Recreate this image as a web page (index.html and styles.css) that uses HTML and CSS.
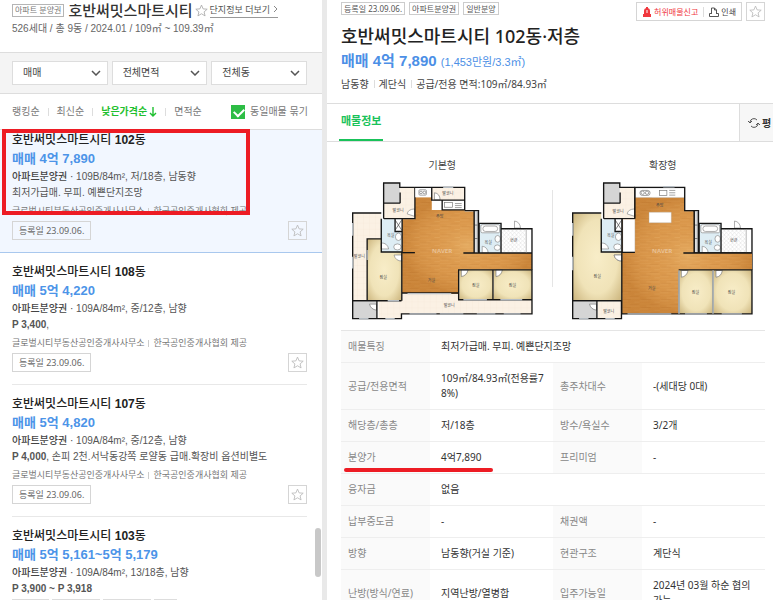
FILE: index.html
```html
<!DOCTYPE html>
<html lang="ko">
<head>
    <meta charset="UTF-8">
    <meta name="viewport" content="width=device-width, initial-scale=1.0">
    <title>호반써밋스마트시티 매물</title>
    <link rel="stylesheet" href="styles.css">
</head>
<body>
    <!-- shared icons and floor plan fills -->
    <svg class="defs" aria-hidden="true">
        <defs>
            <symbol id="star" viewBox="0 0 24 24">
                <path d="M12 2l3 7 7.500.600-5.700 5 1.800 7.400-6.600-4-6.600 4 1.800-7.400-5.700-5 7.500-.600z" fill="none" stroke="currentColor" stroke-width="1.600"/>
            </symbol>
            <symbol id="chevron" viewBox="0 0 10 6">
                <path d="M1 1l4 4 4-4" fill="none" stroke="#555" stroke-width="1.500"/>
            </symbol>
            <pattern id="wood" width="60" height="24" patternUnits="userSpaceOnUse">
                <rect width="60" height="24" fill="#d9964a"/>
                <path d="M0 0h34M20 8h40M0 16h26M44 20h16" stroke="#e0a35a" stroke-width="2"/>
                <path d="M30 4h26M4 12h30" stroke="#d08c42" stroke-width="2"/>
            </pattern>
            <radialGradient id="glow">
                <stop offset="0" stop-color="#ffdc98" stop-opacity=".3"/>
                <stop offset=".5" stop-color="#e8a95c" stop-opacity=".1"/>
                <stop offset="1" stop-color="#a85c12" stop-opacity=".3"/>
            </radialGradient>
            <pattern id="tile" width="18" height="18" patternUnits="userSpaceOnUse">
                <rect width="18" height="18" fill="#fbf1e4"/>
                <path d="M0 0h18M0 0v18" stroke="#efdfcd" stroke-width="1"/>
            </pattern>
            <pattern id="check" width="12" height="12" patternUnits="userSpaceOnUse">
                <rect width="12" height="12" fill="#fff"/>
                <path d="M0 0l12 12M12 0L0 12" stroke="#ddd" stroke-width="1.500"/>
            </pattern>
            <radialGradient id="room" r=".7">
                <stop offset="0" stop-color="#f8edc8"/>
                <stop offset=".6" stop-color="#f0e3b8"/>
                <stop offset="1" stop-color="#cbb47c"/>
            </radialGradient>
            <!-- rooms that are the same in both plans -->
            <g id="core">
                <path d="M188 353V134h38V68h50v38h98v5h28v123h172v50H356v71z" fill="url(#wood)"/>
                <path d="M188 353V134h38V68h50v38h98v5h28v123h172v50H356v71z" fill="url(#glow)"/>
                <path d="M134 86h48V38h44v94h-92z" fill="url(#tile)"/>
                <path d="M133 27h48v59h-48z" fill="#d5d5d5"/>
                <path d="M126 134h62v97h-62z" fill="#deedf4"/>
                <path d="M167 134h20v36h-20z" fill="#fff"/>
                <path d="M168 137l18 28M186 137l-18 28" stroke="#444" stroke-width="2"/>
                <path d="M418 146h64v88h-64z" fill="#deedf4"/>
                <path d="M484 162h90v72h-90z" fill="#fff"/>
                <path d="M484 162h72v72h-72z" fill="url(#check)"/>
                <path d="M402 111h13v123h-13z" fill="#fff"/>
                <path d="M404 111v120M411 111v120M404 151h8M404 191h8" stroke="#555" stroke-width="2"/>
                <g fill="#fff" stroke="#888" stroke-width="2">
                    <rect x="422" y="150" width="56" height="24" rx="4"/>
                    <rect x="428" y="154" width="44" height="16" rx="8"/>
                    <ellipse cx="472" cy="192" rx="8" ry="10"/>
                    <ellipse cx="471" cy="218" rx="9" ry="8"/>
                    <ellipse cx="177" cy="186" rx="9" ry="11"/>
                    <ellipse cx="174" cy="216" rx="11" ry="9"/>
                    <path d="M126 222v-18q18 0 22 18zM426 234v-20q16 2 18 20zM522 160v-21q16 2 18 21zM188 240v18q-20 0-24-18zM203 118q2-14 22-15v22z"/>
                </g>
                <g fill="none" stroke="#151515" stroke-width="4">
                    <path d="M133 132V26h48v13h45M133 86h49M182 54v32M134 132h92V39M126 132v99h61M167 134v36h21M188 132v100"/>
                    <path d="M374 108h41v125M402 108v126M417 234V146h65v88M483 162h91v122M370 234h204"/>
                    <path d="M188 233h38"/>
                </g>
                <path d="M557 163v70" stroke="#999" stroke-width="2"/>
            </g>
        </defs>
    </svg>

    <div class="page">
        <!-- Left: listing panel -->
        <aside class="list-panel">
            <header class="complex">
                <div class="complex-head">
                    <span class="type-badge">아파트 분양권</span>
                    <h1>호반써밋스마트시티</h1>
                    <svg class="star"><use href="#star"/></svg>
                    <a class="more" href="#more">단지정보 더보기 <svg viewBox="0 0 5 8"><path d="M1 1l3 3-3 3" fill="none" stroke="#888"/></svg></a>
                </div>
                <p class="summary">526세대 / 총 9동 / 2024.01 / 109㎡ ~ 109.39㎡</p>
            </header>

            <div class="filters">
                <div class="filter">
                    <select aria-label="거래유형"><option>매매</option></select>
                    <svg><use href="#chevron"/></svg>
                </div>
                <div class="filter">
                    <select aria-label="면적"><option>전체면적</option></select>
                    <svg><use href="#chevron"/></svg>
                </div>
                <div class="filter">
                    <select aria-label="동"><option>전체동</option></select>
                    <svg><use href="#chevron"/></svg>
                </div>
            </div>

            <div class="sort">
                <a href="#rank">랭킹순</a>
                <a href="#recent">최신순</a>
                <a href="#price" class="on">낮은가격순<svg viewBox="0 0 8 10"><path d="M4 0v9M1 6l3 3 3-3" fill="none" stroke="currentColor" stroke-width="1.400"/></svg></a>
                <a href="#area">면적순</a>
                <label class="group"><input type="checkbox" checked>동일매물 묶기</label>
            </div>

            <div class="items">
                <article class="item active">
                    <h2>호반써밋스마트시티 <b>102</b>동</h2>
                    <p class="price">매매 4억 7,890</p>
                    <p class="spec"><b>아파트분양권 ·</b> 109B/84m², 저/18층, 남동향</p>
                    <p class="desc">최저가급매. 무피. 예쁜단지조망</p>
                    <p class="agency"><span>글로벌시티부동산공인중개사사무소</span><span>한국공인중개사협회 제공</span></p>
                    <div class="item-foot">
                        <span class="date">등록일 23.09.06.</span>
                        <button class="fav" aria-label="관심매물"><svg><use href="#star"/></svg></button>
                    </div>
                    <div class="mark-box"></div>
                </article>

                <article class="item">
                    <h2>호반써밋스마트시티 <b>108</b>동</h2>
                    <p class="price">매매 5억 4,220</p>
                    <p class="spec"><b>아파트분양권 ·</b> 109A/84m², 중/12층, 남향</p>
                    <p class="desc"><strong>P 3,400</strong>,</p>
                    <p class="agency"><span>글로벌시티부동산공인중개사사무소</span><span>한국공인중개사협회 제공</span></p>
                    <div class="item-foot">
                        <span class="date">등록일 23.09.06.</span>
                        <button class="fav" aria-label="관심매물"><svg><use href="#star"/></svg></button>
                    </div>
                </article>

                <article class="item">
                    <h2>호반써밋스마트시티 <b>107</b>동</h2>
                    <p class="price">매매 5억 4,820</p>
                    <p class="spec"><b>아파트분양권 ·</b> 109A/84m², 중/12층, 남향</p>
                    <p class="desc"><strong>P 4,000</strong>, 손피 2천.서낙동강쪽 로얄동 급매.확장비 옵션비별도</p>
                    <p class="agency"><span>글로벌시티부동산공인중개사사무소</span><span>한국공인중개사협회 제공</span></p>
                    <div class="item-foot">
                        <span class="date">등록일 23.09.06.</span>
                        <button class="fav" aria-label="관심매물"><svg><use href="#star"/></svg></button>
                    </div>
                </article>

                <article class="item">
                    <h2>호반써밋스마트시티 <b>103</b>동</h2>
                    <p class="price">매매 5억 5,161~5억 5,179</p>
                    <p class="spec"><b>아파트분양권 ·</b> 109A/84m², 13/18층, 남향</p>
                    <p class="desc"><strong>P 3,900 ~ P 3,918</strong></p>
                    <div class="tags"><span></span><span></span><span></span><span></span></div>
                </article>
            </div>
            <div class="scroll-thumb"></div>
        </aside>

        <!-- Right: detail panel -->
        <main class="detail">
            <header class="detail-head">
                <div class="top-row">
                    <span class="badge">등록일 23.09.06.</span>
                    <span class="badge">아파트분양권</span>
                    <span class="badge">일반분양</span>
                    <div class="tools">
                        <button class="report"><svg viewBox="0 0 10 10"><path d="M2 7V4a3 3 0 0 1 6 0v3zM1 7h8v3H1zM4 0h2v2H4z" fill="#f0383e"/><path d="M5 3v3" stroke="#fff"/></svg>허위매물신고</button>
                        <button class="print"><svg viewBox="0 0 10 10"><path d="M2.500 7V1h3l2 2v4M5.500 1v2h2M2 6.500H.500v3h9v-3H8" fill="none" stroke="#555"/></svg>인쇄</button>
                    </div>
                    <button class="fav" aria-label="관심매물"><svg><use href="#star"/></svg></button>
                </div>
                <h2>호반써밋스마트시티 102동·저층</h2>
                <p class="detail-price">매매 4억 7,890 <span>(1,453만원/3.3㎡)</span></p>
                <p class="facts"><span>남동향</span><span>계단식</span><span>공급/전용 면적:109㎡/84.93㎡</span></p>
            </header>

            <nav class="tabs">
                <a href="#info" class="tab">매물정보</a>
                <button class="unit"><svg viewBox="0 0 12 12"><path d="M2 5a4 4 0 0 1 7-2M10 7a4 4 0 0 1-7 2M0 4l2 2 2-2M8 8l2-2 2 2" fill="none" stroke="#555"/></svg>평</button>
            </nav>

            <section class="plans">
                <figure>
                    <figcaption>기본형</figcaption>
                    <svg viewBox="36 20 544 414" role="img" aria-label="기본형 평면도">
                        <path d="M41 116h85v76H84v184H41zM118 376h68v-21h388v60H186v14h-68z" fill="url(#tile)"/>
                        <path d="M276 39h98v38h-98z" fill="url(#tile)"/>
                        <path d="M84 192h42v40h60v144H84z" fill="url(#room)"/>
                        <path d="M41 378h71v51H41z" fill="#d5d5d5"/>
                        <use href="#core"/>
                        <path d="M358 284h100v88H358z" fill="url(#room)"/>
                        <path d="M460 284h114v88H460z" fill="url(#room)"/>
                        <path d="M227 40h48v28h-48zM308 78h64v28h-64z" fill="#fff"/>
                        <g fill="#fff" stroke="#777" stroke-width="2">
                            <rect x="238" y="46" width="22" height="16" rx="3"/>
                            <circle cx="244" cy="54" r="4"/><circle cx="254" cy="54" r="4"/>
                            <rect x="314" y="84" width="24" height="14"/>
                            <path d="M345 87h20M345 93h20M345 99h20"/>
                            <path d="M284 76V55q16 2 17 21zM364 284v20q16-2 20-20zM467 284v20q16-2 19-20zM112 404V386H91q4 16 21 18z"/>
                        </g>
                        <g fill="none" stroke="#151515" stroke-width="4">
                            <path d="M226 39h148v69M276 39v38h98M307 78v28h67M126 115H41v314h77M84 376V192h42M187 231v145M41 376h145M113 378v51M118 429h68v-14h388V284H356v89h218M458 284v89M188 353h168"/>
                        </g>
                        <path d="M41 145v38M41 245v35M204 355h130M145 376h34M310 39h30M60 429h28M138 429h28M210 415h80M300 415h70M410 415h55M490 415h50M370 373h70M480 373h65M84 225v30" stroke="#b5bcc2" stroke-width="4"/>
                        <g class="room-name">
                            <text x="176" y="112">발코니</text><text x="324" y="62">발코니</text><text x="300" y="129">주방</text>
                            <text x="154" y="187">욕실</text><text x="444" y="208">욕실</text><text x="520" y="202">현관</text>
                            <text x="61" y="249">발코니</text><text x="132" y="311">침실</text><text x="275" y="319">거실</text>
                            <text x="407" y="335">침실</text><text x="516" y="335">침실</text><text x="328" y="395">발코니</text>
                        </g>
                        <text class="watermark" x="307" y="234">NAVER</text>
                    </svg>
                </figure>
                <figure>
                    <figcaption>확장형</figcaption>
                    <svg viewBox="36 20 544 414" role="img" aria-label="확장형 평면도">
                        <path d="M41 116h85v116h60v144H41z" fill="url(#room)"/>
                        <path d="M41 378h71v51H41z" fill="#d5d5d5"/>
                        <path d="M116 378h70v51h-70z" fill="url(#tile)"/>
                        <use href="#core"/>
                        <!-- living room and kitchen run the full height here -->
                        <path d="M188 415V134h38V68h148v43h28v123h172v50H356v131z" fill="url(#wood)"/>
                        <path d="M188 415V134h38V68h148v43h28v123h172v50H356v131z" fill="url(#glow)"/>
                        <path d="M358 284h100v131H358z" fill="url(#room)"/>
                        <path d="M460 284h114v131H460z" fill="url(#room)"/>
                        <path d="M227 41h146v28H227zM190 134h36v97h-36zM268 113h66v31h-66z" fill="#fff" stroke="#aaa" stroke-width="1"/>
                        <g fill="#fff" stroke="#777" stroke-width="2">
                            <rect x="241" y="48" width="30" height="15" rx="7"/>
                            <circle cx="249" cy="55" r="5"/><circle cx="262" cy="55" r="5"/>
                            <rect x="299" y="48" width="22" height="15"/>
                            <path d="M328 48h18M328 55h18M328 62h18"/>
                            <path d="M188 240v18q-20 0-24-18zM364 286v20q16-2 20-20zM467 286v20q16-2 19-20zM112 404V386H91q4 16 21 18z"/>
                        </g>
                        <g fill="none" stroke="#151515" stroke-width="4">
                            <path d="M226 132V39h148v69h28v126M188 132v100h38M370 234h204M126 115H41v314h145v-51M41 376h145M113 378v51M187 231v184h387V284H356"/>
                        </g>
                        <path d="M357 286v129M458 286v129" stroke="#9ca3a6" stroke-width="5"/>
                        <path d="M41 145v38M41 245v40M310 37h34M60 429h28M138 429h28M204 415h130M375 415h65M484 415h60" stroke="#b5bcc2" stroke-width="4"/>
                        <g class="room-name">
                            <text x="176" y="114">발코니</text><text x="300" y="97">주방</text><text x="154" y="187">욕실</text>
                            <text x="444" y="208">욕실</text><text x="520" y="202">현관</text><text x="114" y="309">침실</text>
                            <text x="276" y="345">거실</text><text x="406" y="356">침실</text><text x="513" y="356">침실</text>
                            <text x="148" y="411">발코니</text>
                        </g>
                        <text class="watermark" x="307" y="234">NAVER</text>
                    </svg>
                </figure>
            </section>

            <table class="info">
                <colgroup><col class="c-label"><col class="c-value"><col class="c-label"><col class="c-value"></colgroup>
                <tbody>
                    <tr><th>매물특징</th><td colspan="3">최저가급매. 무피. 예쁜단지조망</td></tr>
                    <tr><th>공급/전용면적</th><td>109㎡/84.93㎡(전용률78%)</td><th>총주차대수</th><td>-(세대당 0대)</td></tr>
                    <tr><th>해당층/총층</th><td>저/18층</td><th>방수/욕실수</th><td>3/2개</td></tr>
                    <tr><th class="marked">분양가<span class="mark-line"></span></th><td>4억7,890</td><th>프리미엄</th><td>-</td></tr>
                    <tr><th>융자금</th><td colspan="3">없음</td></tr>
                    <tr><th>납부중도금</th><td>-</td><th>채권액</th><td>-</td></tr>
                    <tr><th>방향</th><td>남동향(거실 기준)</td><th>현관구조</th><td>계단식</td></tr>
                    <tr><th>난방(방식/연료)</th><td>지역난방/열병합</td><th>입주가능일</th><td>2024년 03월 하순 협의가능</td></tr>
                </tbody>
            </table>
        </main>
    </div>
</body>
</html>
```

FILE: styles.css
```css
* {
    box-sizing: border-box;
}

body {
    margin: 0;
    font-family: "Liberation Sans", "Noto Sans CJK KR", sans-serif;
    font-size: 10px;
    line-height: 16px;
    color: #555;
    background: #fff;
}

h1, h2, p, figure {
    margin: 0;
}

a {
    color: inherit;
    text-decoration: none;
}

button, select, input {
    margin: 0;
    font: inherit;
    color: inherit;
}

.defs {
    position: absolute;
    width: 0;
    height: 0;
}

.page {
    display: flex;
    height: 100vh;
    overflow: hidden;
}

/* Left panel */
.list-panel {
    position: relative;
    flex: 0 0 327px;
    border-right: 5px solid #e9e9e9;
    overflow: hidden;
}

.complex {
    height: 52px;
    padding: 0 12px;
}

.complex-head {
    display: flex;
    align-items: center;
    height: 21px;
    white-space: nowrap;
}

.type-badge {
    padding: 0 2px;
    border: 1px solid #b5b5b5;
    font-size: 8px;
    line-height: 11px;
    color: #777;
}

.complex h1 {
    margin-left: 4px;
    font-size: 15px;
    line-height: 20px;
    font-weight: 500;
    color: #333;
}

.star {
    width: 13px;
    height: 13px;
    margin: 0 2px;
    color: #aaa;
}

.more {
    border-bottom: 1px solid #999;
    font-size: 9px;
    line-height: 13px;
    color: #555;
}

.more svg {
    width: 5px;
    height: 8px;
}

.summary {
    color: #666;
}

.filters {
    display: flex;
    gap: 4px;
    padding: 8px 15px 8px 12px;
    background: #f4f4f4;
    border-top: 1px solid #ddd;
    border-bottom: 1px solid #ddd;
}

.filter {
    position: relative;
    flex: 1;
}

.filter select {
    display: block;
    width: 100%;
    height: 24px;
    padding: 0 10px;
    border: 1px solid #ddd;
    border-radius: 0;
    background: #fff;
    color: #444;
    appearance: none;
}

.filter svg {
    position: absolute;
    top: 9px;
    right: 7px;
    width: 10px;
    height: 6px;
    pointer-events: none;
}

.sort {
    display: flex;
    align-items: center;
    height: 36px;
    padding: 0 14px 0 12px;
    border-bottom: 1px solid #ddd;
    color: #777;
    white-space: nowrap;
}

.sort a + a {
    margin-left: 8px;
    padding-left: 9px;
    background: linear-gradient(#ddd, #ddd) left center / 1px 8px no-repeat;
}

.sort .on {
    font-weight: 700;
    color: #1fbf2f;
}

.sort .on svg {
    width: 8px;
    height: 10px;
    margin-left: 2px;
    vertical-align: -2px;
}

.group {
    display: flex;
    align-items: center;
    gap: 5px;
    margin-left: auto;
}

.group input {
    width: 14px;
    height: 14px;
    background: #2dbd45;
    appearance: none;
}

.group input:checked::after {
    content: "";
    display: block;
    width: 8px;
    height: 5px;
    margin: 3px 0 0 3px;
    border-left: 2px solid #fff;
    border-bottom: 2px solid #fff;
    transform: rotate(-45deg);
}

/* Listing items */
.item {
    padding: 10px 0 12px;
    margin: 0 15px 0 12px;
    border-bottom: 1px solid #e8e8e8;
    white-space: nowrap;
}

.item.active {
    position: relative;
    margin: 0;
    padding: 1px 15px 12px 12px;
    background: #f2f7ff;
    border-bottom-color: #a9c8ee;
}

.item h2 {
    font-size: 12px;
    line-height: 18px;
    font-weight: 500;
    color: #222;
}

.price {
    font-size: 13px;
    line-height: 20px;
    font-weight: 700;
    color: #4c94e8;
}

.spec b {
    font-weight: 500;
    color: #444;
}

.desc strong {
    color: #555;
}

.agency {
    display: flex;
    margin: 2px 0;
    font-size: 9px;
    color: #777;
}

.agency span + span {
    margin-left: 4px;
    padding-left: 5px;
    background: linear-gradient(#ccc, #ccc) left center / 1px 7px no-repeat;
}

.item-foot {
    display: flex;
    justify-content: space-between;
}

.date {
    padding: 0 6px;
    border: 1px solid #d5d5d5;
    font-family: "Noto Sans", "Noto Sans CJK KR", sans-serif;
    font-size: 9px;
    line-height: 17px;
    color: #666;
}

.fav {
    display: flex;
    align-items: center;
    justify-content: center;
    width: 19px;
    height: 19px;
    padding: 0;
    border: 1px solid #d5d5d5;
    background: #fff;
    color: #bbb;
}

.active .fav {
    background: transparent;
}

.fav svg {
    width: 13px;
    height: 13px;
}

.tags {
    display: flex;
    gap: 3px;
    margin-top: 2px;
}

.tags span {
    width: 48px;
    height: 18px;
    border: 1px solid #ddd;
}

.tags span:first-child {
    width: 37px;
}

.tags span:last-child {
    width: 23px;
}

/* Red highlight over the selected listing */
.mark-box {
    position: absolute;
    top: -1px;
    left: 2px;
    width: 248px;
    height: 86px;
    border: 4px solid #ed1c24;
}

.scroll-thumb {
    position: absolute;
    top: 528px;
    right: 1px;
    width: 6px;
    height: 49px;
    border-radius: 3px;
    background: #c8c8c8;
}

/* Right panel */
.detail {
    flex: 1;
    min-width: 0;
    font-family: "Noto Sans", "Noto Sans CJK KR", sans-serif;
}

.detail-head {
    height: 103px;
    padding: 2px 8px 0 14px;
    color: #444;
    white-space: nowrap;
}

.top-row {
    display: flex;
    gap: 4px;
    height: 22px;
    align-items: flex-start;
}

.badge {
    padding: 0 2px;
    border: 1px solid #ccc;
    font-size: 8px;
    line-height: 11px;
    color: #555;
}

.tools {
    display: flex;
    align-items: center;
    height: 19px;
    margin-left: auto;
    border: 1px solid #d5d5d5;
    font-size: 8px;
}

.tools button {
    display: flex;
    align-items: center;
    gap: 2px;
    padding: 0 5px;
    border: 0;
    background: none;
    line-height: 10px;
}

.tools .report {
    color: #f0383e;
}

.tools .print {
    border-left: 1px solid #ddd;
}

.tools svg {
    width: 10px;
    height: 10px;
}

.detail-head h2 {
    font-size: 18px;
    line-height: 24px;
    font-weight: 500;
    color: #222;
}

.detail-price {
    font-family: "Liberation Sans", "Noto Sans CJK KR", sans-serif;
    font-size: 15px;
    line-height: 26px;
    font-weight: 700;
    color: #4c8fe6;
}

.detail-price span {
    font-size: 11px;
    font-weight: 400;
}

.facts {
    display: flex;
    line-height: 18px;
}

.facts span + span {
    margin-left: 5px;
    padding-left: 5px;
    background: linear-gradient(#ddd, #ddd) left center / 1px 8px no-repeat;
}

.tabs {
    display: flex;
    justify-content: space-between;
    height: 39px;
    padding-left: 12px;
    border-top: 1px solid #ddd;
    border-bottom: 1px solid #ddd;
}

.tab {
    padding: 0 2px;
    border-bottom: 2px solid #19c25a;
    font-size: 11px;
    line-height: 34px;
    font-weight: 700;
    color: #19c25a;
}

.unit {
    display: flex;
    align-items: center;
    gap: 2px;
    width: 34px;
    padding: 0 0 0 8px;
    border: 0;
    border-left: 1px solid #ddd;
    background: #f7f7f7;
    font-weight: 700;
    color: #333;
}

.unit svg {
    flex: none;
    width: 12px;
    height: 12px;
}

.plans {
    display: grid;
    grid-template-columns: 1fr 1fr;
    padding: 15px 0 10px 5px;
}

.plans figure {
    text-align: center;
}

.plans figure:first-child {
    background: linear-gradient(#e5e5e5, #e5e5e5) right center / 1px 97px no-repeat;
}

.plans figcaption {
    margin-bottom: 8px;
    color: #444;
}

.plans svg {
    display: block;
    width: 83%;
    height: auto;
    margin: 0 auto;
}

.room-name {
    font-size: 12px;
    fill: #444;
    text-anchor: middle;
}

.watermark {
    font-size: 18px;
    font-weight: 700;
    fill: #fff;
    fill-opacity: .4;
    text-anchor: middle;
}

/* Info table */
.info {
    width: calc(100% - 22px);
    margin: 0 8px 0 14px;
    table-layout: fixed;
    border-collapse: separate;
    border-spacing: 0;
    border-top: 1px solid #e5e5e5;
    line-height: 15px;
}

.c-label {
    width: 21%;
}

.c-value {
    width: 29%;
}

.info th, .info td {
    padding: 8px 7px;
    border-bottom: 1px solid #eee;
    font-weight: 400;
    text-align: left;
    word-break: break-all;
}

.info th {
    background: #fafafa;
    color: #888;
}

.info td {
    padding-left: 11px;
    color: #333;
}

.marked {
    position: relative;
}

.mark-line {
    position: absolute;
    z-index: 1;
    left: 3px;
    bottom: 1px;
    width: 149px;
    height: 4px;
    border-radius: 2px;
    background: #ed1c24;
}
```
